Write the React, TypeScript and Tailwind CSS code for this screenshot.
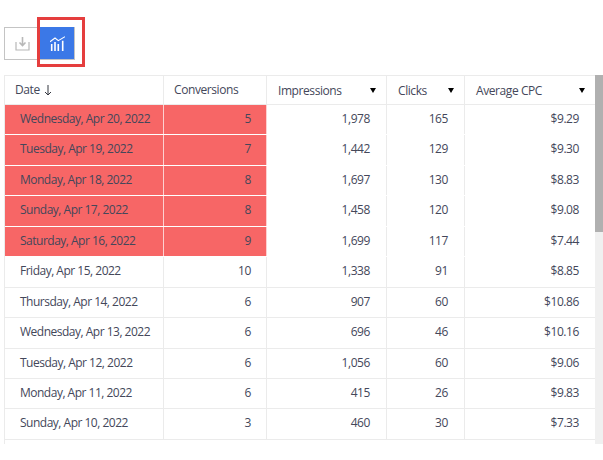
const rows = [
    { date: "Wednesday, Apr 20, 2022", conversions: "5", impressions: "1,978", clicks: "165", cpc: "$9.29", hot: true },
    { date: "Tuesday, Apr 19, 2022", conversions: "7", impressions: "1,442", clicks: "129", cpc: "$9.30", hot: true },
    { date: "Monday, Apr 18, 2022", conversions: "8", impressions: "1,697", clicks: "130", cpc: "$8.83", hot: true },
    { date: "Sunday, Apr 17, 2022", conversions: "8", impressions: "1,458", clicks: "120", cpc: "$9.08", hot: true },
    { date: "Saturday, Apr 16, 2022", conversions: "9", impressions: "1,699", clicks: "117", cpc: "$7.44", hot: true },
    { date: "Friday, Apr 15, 2022", conversions: "10", impressions: "1,338", clicks: "91", cpc: "$8.85", hot: false },
    { date: "Thursday, Apr 14, 2022", conversions: "6", impressions: "907", clicks: "60", cpc: "$10.86", hot: false },
    { date: "Wednesday, Apr 13, 2022", conversions: "6", impressions: "696", clicks: "46", cpc: "$10.16", hot: false },
    { date: "Tuesday, Apr 12, 2022", conversions: "6", impressions: "1,056", clicks: "60", cpc: "$9.06", hot: false },
    { date: "Monday, Apr 11, 2022", conversions: "6", impressions: "415", clicks: "26", cpc: "$9.83", hot: false },
    { date: "Sunday, Apr 10, 2022", conversions: "3", impressions: "460", clicks: "30", cpc: "$7.33", hot: false },
];

function Caret() {
    return <span className="mr-[6px] h-0 w-0 border-x-[3.5px] border-t-[5px] border-x-transparent border-t-black" />;
}

function HeaderCell({ label, width, sort }: { label: string, width: string, sort?: boolean }) {
    return (
        <div className={`${width} flex h-full shrink-0 items-center justify-between border-r border-[#ebebeb] pl-[11px] pr-[4px] pt-[1px]`}>
            <span>{label}</span>
            {sort && <Caret />}
        </div>
    );
}

function Row({ row }: { row: typeof rows[number] }) {
    const hot = row.hot ? "bg-[#f76666]" : "";
    const border = row.hot ? "border-white/70" : "border-[#ebebeb]";
    return (
        <div className={`flex h-[30.45px] border-b ${border}`}>
            <div className={`w-[159px] shrink-0 border-r pl-[15px] leading-[28px] tracking-[-0.5px] ${hot} ${border}`}>{row.date}</div>
            <div className={`w-[103px] shrink-0 border-r pr-[15px] text-right leading-[28px] ${hot} ${border}`}>{row.conversions}</div>
            <div className="w-[120px] shrink-0 border-r border-[#ebebeb] pr-[16px] text-right leading-[28px]">{row.impressions}</div>
            <div className="w-[78px] shrink-0 border-r border-[#ebebeb] pr-[16px] text-right leading-[28px]">{row.clicks}</div>
            <div className="flex-1 pr-[16px] text-right leading-[28px]">{row.cpc}</div>
        </div>
    );
}

export default function App() {
    return (
        <div className="relative h-[460px] w-[603px] overflow-hidden bg-white font-['Open_Sans',sans-serif] text-[12px] tracking-[-0.42px] text-[#44475a]">
            <div className="flex pl-[4px] pt-[27px]">
                <button className="flex h-[33px] w-[36px] items-center justify-center border border-[#c4c4c4] bg-white">
                    <svg width="15" height="14" viewBox="0 0 15 14" fill="none" stroke="#b8b8b8" strokeWidth="1.2">
                        <path d="M1 5v8h13V5" />
                        <path d="M7.5 0v8M4.5 5.5l3 3 3-3" strokeWidth="1.6" />
                    </svg>
                </button>
                <button className="flex h-[33px] w-[35px] items-center justify-center border-r border-b border-[#c4c4c4] bg-[#3b78e7]">
                    <svg className="mt-[1px]" width="15" height="15" viewBox="0 0 15 15" fill="none" stroke="white">
                        <path d="M0 5.7L5 2l3.3 2.7L15 .7" strokeWidth="1.1" />
                        <path d="M1.7 15V8M5 15V6M8.3 15V8M12.7 15V4.7" strokeWidth="1.6" />
                    </svg>
                </button>
            </div>

            <div className="absolute left-[37px] top-[17px] h-[50px] w-[48px] border-[3px] border-[#e53e3e]" />

            <div className="ml-[4px] mt-[15px] flex h-[369px] w-[599px] overflow-hidden">
                <div className="w-[591px] border-l border-[#ebebeb]">
                    <div className="flex h-[30px] border-y border-[#ebebeb]">
                        <div className="flex h-full w-[159px] shrink-0 items-center gap-[4px] border-r border-[#ebebeb] pl-[10px]">
                            <span>Date</span>
                            <svg width="8" height="11" viewBox="0 0 8 11" fill="none" stroke="#33363f" strokeWidth="1">
                                <path d="M4 0v10M1 7l3 3 3-3" />
                            </svg>
                        </div>
                        <div className="flex h-full w-[103px] shrink-0 items-center border-r border-[#ebebeb] pb-[1px] pl-[10px]">Conversions</div>
                        <HeaderCell label="Impressions" width="w-[120px]" sort />
                        <HeaderCell label="Clicks" width="w-[78px]" sort />
                        <div className="flex h-full flex-1 items-center justify-between pl-[11px] pr-[4px] pt-[1px]">
                            <span>Average CPC</span>
                            <Caret />
                        </div>
                    </div>
                    {rows.map((row) => <Row key={row.date} row={row} />)}
                </div>
                <div className="w-[8px] bg-[#f0f0f0]">
                    <div className="h-[157px] bg-[#b0b0b0]" />
                </div>
            </div>
        </div>
    );
}
